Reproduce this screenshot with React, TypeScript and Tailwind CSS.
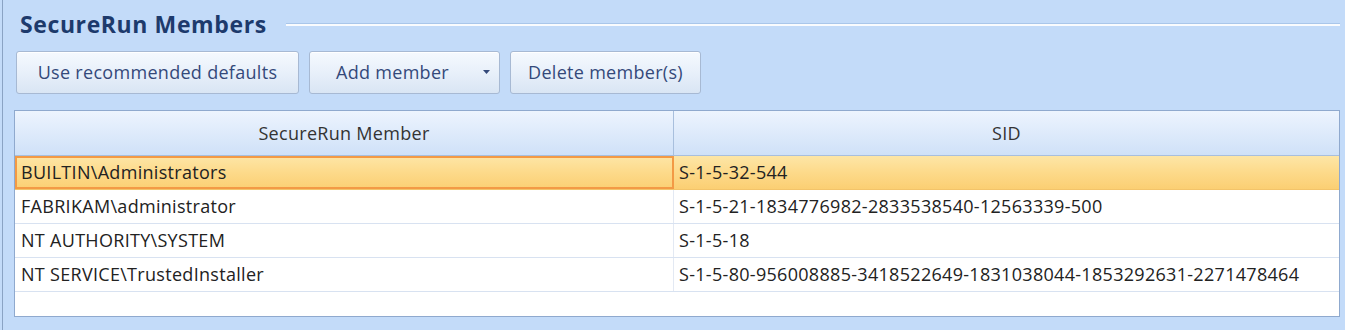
import React from "react";

const rows = [
  { member: "BUILTIN\\Administrators", sid: "S-1-5-32-544" },
  { member: "FABRIKAM\\administrator", sid: "S-1-5-21-1834776982-2833538540-12563339-500" },
  { member: "NT AUTHORITY\\SYSTEM", sid: "S-1-5-18" },
  {
    member: "NT SERVICE\\TrustedInstaller",
    sid: "S-1-5-80-956008885-3418522649-1831038044-1853292631-2271478464",
  },
];

const btn =
  "flex h-[43px] items-center rounded-[3px] border border-[#a7b9d3] bg-gradient-to-b from-[#f5f9fe] via-[#e8f0fa] to-[#d9e5f4] text-[18px] tracking-[0.3px] text-[#34497a] shadow-[inset_0_1px_0_#ffffff]";

export default function App() {
  return (
    <div className="h-[330px] w-[1345px] overflow-hidden bg-[#c3dbf9] pl-[2px] font-['Open_Sans',sans-serif]">
      <div className="flex h-full flex-col border-l border-[#8aa3c4] pr-[5px] pl-[11px]">
        <div className="flex h-[46px] items-center pl-[6px] pt-[2px]">
          <h1 className="text-[23px] font-bold leading-none tracking-[0.6px] text-[#1d3a6c]">SecureRun Members</h1>
          <div className="ml-[19px] flex-1">
            <div className="h-px bg-[#a9c6ea]" />
            <div className="h-[2px] bg-white/90" />
          </div>
        </div>

        <div className="mt-[5px] flex gap-[10px] pl-[2px]">
          <button className={btn + " w-[283px] justify-center"}>Use recommended defaults</button>
          <button className={btn + " w-[191px] pl-[26px] pr-[8px]"}>
            <span className="flex-1 text-left">Add member</span>
            <svg width="8" height="5" viewBox="0 0 8 5" className="mb-[1px]">
              <path d="M0 0h7l-3.5 4z" fill="#34497a" />
            </svg>
          </button>
          <button className={btn + " w-[191px] justify-center"}>Delete member(s)</button>
        </div>

        <div className="mt-[16px] h-[207px] w-[1326px] border border-[#8fa9ce] bg-white text-[18px] tracking-[0.3px] text-[#222]">
          <div className="flex h-[45px] border-b border-[#a8bfdd] bg-gradient-to-b from-[#edf4fe] to-[#cfe1f8] text-[#333]">
            <div className="flex w-[659px] items-center justify-center border-r border-[#a8bfdd]">SecureRun Member</div>
            <div className="flex flex-1 items-center justify-center">SID</div>
          </div>
          {rows.map((r, i) => (
            <div
              key={r.member}
              className={
                "flex h-[34px] border-b " +
                (i === 0
                  ? "border-[#f3c46a] bg-gradient-to-b from-[#fde6a6] via-[#fdda8a] to-[#fbcf73]"
                  : "border-[#d8e2f1]")
              }
            >
              <div
                className={
                  "flex w-[659px] items-center pl-[4px] " +
                  (i === 0 ? "border-2 border-[#f39a45]" : "border-r border-[#e3e9f3] pl-[6px]")
                }
              >
                {r.member}
              </div>
              <div className="flex flex-1 items-center pl-[5px]">{r.sid}</div>
            </div>
          ))}
        </div>
      </div>
    </div>
  );
}
